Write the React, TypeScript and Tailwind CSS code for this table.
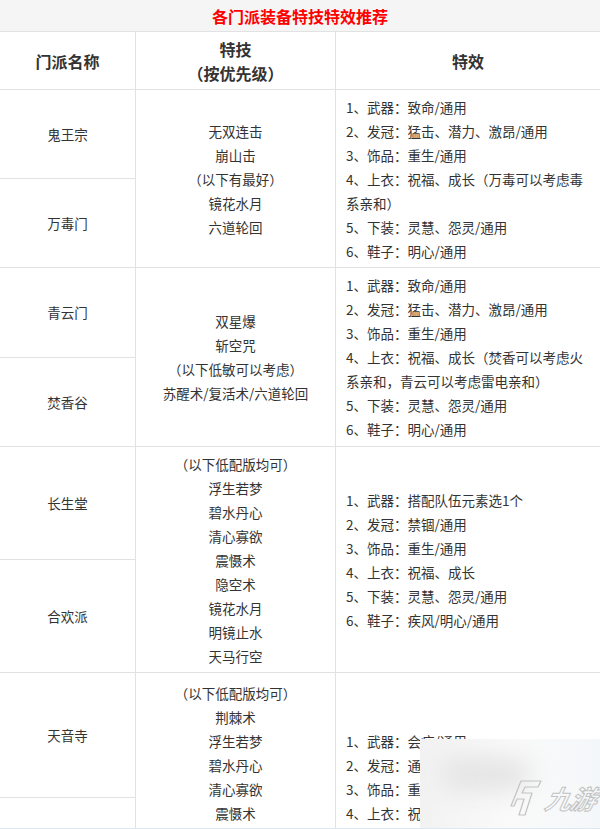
import React from "react";

const font = { fontFamily: '"Noto Sans CJK SC", "Noto Sans", sans-serif' };

function Lines({ items }: { items: string[] }) {
  return (
    <>
      {items.map((t, i) => (
        <div key={i} className="whitespace-nowrap leading-6">
          {t}
        </div>
      ))}
    </>
  );
}

const nameCell =
  "border-b border-r border-[#e2e2e2] flex items-center justify-center text-[13.5px] text-[#333]";
const midCell =
  "row-span-2 border-b border-r border-[#e2e2e2] flex flex-col items-center justify-center text-[13.5px] text-[#333]";
const rightCell =
  "row-span-2 border-b border-[#e2e2e2] flex flex-col justify-center pl-[10px] text-[13.5px] text-[#333]";

export default function App() {
  return (
    <div className="relative w-[600px] h-[829px] overflow-hidden bg-white border-b border-[#dde8f1]" style={font}>
      <div className="grid grid-cols-[136px_200px_264px] grid-rows-[32px_58px_89px_89px_90px_89px_113px_113px_125px_125px]">
        <div className="col-span-3 bg-[#f5f5f5] border-b border-[#e2e2e2] flex items-center justify-center text-[16px] font-bold text-[#ff0000]">
          各门派装备特技特效推荐
        </div>
        <div className="border-b border-r border-[#e2e2e2] flex items-center justify-center text-[16px] font-bold text-[#333]">
          门派名称
        </div>
        <div className="border-b border-r border-[#e2e2e2] flex flex-col items-center justify-center text-[16px] font-bold text-[#333] leading-[24px]">
          <div>特技</div>
          <div>（按优先级）</div>
        </div>
        <div className="border-b border-[#e2e2e2] flex items-center justify-center text-[16px] font-bold text-[#333]">
          特效
        </div>

        <div className={nameCell}>鬼王宗</div>
        <div className={midCell}>
          <Lines items={["无双连击", "崩山击", "（以下有最好）", "镜花水月", "六道轮回"]} />
        </div>
        <div className={rightCell}>
          <Lines
            items={[
              "1、武器：致命/通用",
              "2、发冠：猛击、潜力、激昂/通用",
              "3、饰品：重生/通用",
              "4、上衣：祝福、成长（万毒可以考虑毒",
              "系亲和）",
              "5、下装：灵慧、怨灵/通用",
              "6、鞋子：明心/通用",
            ]}
          />
        </div>
        <div className={nameCell}>万毒门</div>

        <div className={nameCell}>青云门</div>
        <div className={midCell}>
          <Lines items={["双星爆", "斩空咒", "（以下低敏可以考虑）", "苏醒术/复活术/六道轮回"]} />
        </div>
        <div className={rightCell}>
          <Lines
            items={[
              "1、武器：致命/通用",
              "2、发冠：猛击、潜力、激昂/通用",
              "3、饰品：重生/通用",
              "4、上衣：祝福、成长（焚香可以考虑火",
              "系亲和，青云可以考虑雷电亲和）",
              "5、下装：灵慧、怨灵/通用",
              "6、鞋子：明心/通用",
            ]}
          />
        </div>
        <div className={nameCell}>焚香谷</div>

        <div className={nameCell}>长生堂</div>
        <div className={midCell}>
          <Lines
            items={[
              "（以下低配版均可）",
              "浮生若梦",
              "碧水丹心",
              "清心寡欲",
              "震慑术",
              "隐空术",
              "镜花水月",
              "明镜止水",
              "天马行空",
            ]}
          />
        </div>
        <div className={rightCell}>
          <Lines
            items={[
              "1、武器：搭配队伍元素选1个",
              "2、发冠：禁锢/通用",
              "3、饰品：重生/通用",
              "4、上衣：祝福、成长",
              "5、下装：灵慧、怨灵/通用",
              "6、鞋子：疾风/明心/通用",
            ]}
          />
        </div>
        <div className={nameCell}>合欢派</div>

        <div className={nameCell}>天音寺</div>
        <div className={midCell + " !justify-start pt-[8px]"}>
          <Lines
            items={[
              "（以下低配版均可）",
              "荆棘术",
              "浮生若梦",
              "碧水丹心",
              "清心寡欲",
              "震慑术",
            ]}
          />
        </div>
        <div className={rightCell + " !justify-start pt-[56px]"}>
          <Lines
            items={[
              "1、武器：会疗/通用",
              "2、发冠：通用",
              "3、饰品：重生/通用",
              "4、上衣：祝福、成长",
            ]}
          />
        </div>
        <div className="border-b border-r border-[#e2e2e2]" />
      </div>

      {/* watermark overlay */}
      <div className="absolute left-[420px] top-[739px] w-[180px] h-[89px] bg-gradient-to-r from-[#f2f2f2] via-[#fafafa] to-[#f4f7f9] backdrop-blur-md overflow-hidden">
        <div className="absolute left-[20px] top-[18px] w-[90px] h-[34px] rounded-full bg-[#e4e4e4] blur-md" />
        <div className="absolute left-[90px] top-[40px] flex items-center gap-[4px]">
          <svg width="32" height="38" viewBox="0 0 32 38" fill="none" stroke="#c2c2c2" strokeWidth="1.2" strokeLinejoin="round">
            <path d="M11 2 L31 2 L28 8 L15 8 L12 14 L22 14 L15 36 L9 36 L14 20 L7 20 L4 27 L1 27 Z" />
          </svg>
          <span
            className="italic font-bold text-[26px] leading-none text-transparent tracking-[-1px] [-webkit-text-stroke:1px_#c2c2c2]"
            style={{ transform: "skewX(-12deg)" }}
          >
            九游
          </span>
        </div>
      </div>
    </div>
  );
}
